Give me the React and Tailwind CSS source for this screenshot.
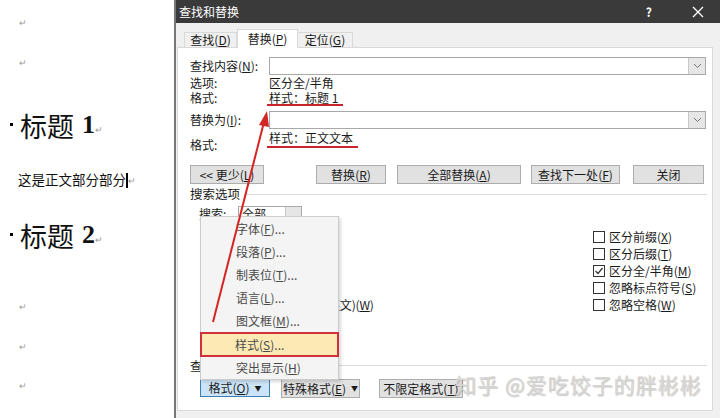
import React from "react";

const ui = "font-['Noto_Sans_CJK_SC','Noto_Sans',sans-serif]";

function Key({ k }) {
  return <>(<u>{k}</u>)</>;
}

function Btn({ children, className = "" }) {
  return (
    <div className={`h-[19px] flex items-center justify-center bg-[#e1e1e1] border border-[#adadad] leading-none ${className}`}>
      {children}
    </div>
  );
}

function Box({ checked }) {
  return (
    <span className="w-[12px] h-[12px] border border-[#333] bg-white flex items-center justify-center mr-[4px] shrink-0">
      {checked && (
        <svg width="10" height="10" viewBox="0 0 10 10">
          <path d="M1.5 5 L4 7.5 L8.5 2" fill="none" stroke="#333" strokeWidth="1.2" />
        </svg>
      )}
    </span>
  );
}

function Field() {
  return (
    <div className="w-[437px] h-[18px] bg-white border border-[#a9a9a9] flex justify-end">
      <div className="w-[17px] h-full bg-[#e6e6e6] border-l border-[#c8c8c8] flex items-center justify-center">
        <svg width="9" height="6" viewBox="0 0 9 6">
          <path d="M1 1 L4.5 4.5 L8 1" fill="none" stroke="#777" strokeWidth="1" />
        </svg>
      </div>
    </div>
  );
}

function Pilcrow() {
  return <span className="text-[9px] text-[#999] leading-none">↵</span>;
}

function Heading({ n }) {
  return (
    <div className="h-[34px] flex items-center pl-[10px] leading-none">
      <span className="w-[3px] h-[3px] bg-black mr-[7px] -mt-[2px]" />
      <span className="text-[27px] text-[#111]">标题</span>
      <span className="text-[26px] font-bold font-['Liberation_Serif',serif] ml-[8px]">{n}</span>
      <span className="self-end mb-[8px]"><Pilcrow /></span>
    </div>
  );
}

const leftOpts = ["区分大小写", "H", "全字匹配", "Y", "使用通配符", "U", "同音(英文)", "K", "查找单词的所有形式(英文)", "W"];
const rightOpts = [
  ["区分前缀", "X", false],
  ["区分后缀", "T", false],
  ["区分全/半角", "M", true],
  ["忽略标点符号", "S", false],
  ["忽略空格", "W", false],
];

const menuItems = [
  ["字体", "F", "..."],
  ["段落", "P", "..."],
  ["制表位", "T", "..."],
  ["语言", "L", "..."],
  ["图文框", "M", "..."],
];

export default function App() {
  return (
    <div className={`relative w-[720px] h-[418px] overflow-hidden flex bg-white ${ui}`}>
      {/* document page */}
      <div className="w-[174px] shrink-0 bg-white flex flex-col text-[#111]">
        <div className="h-[15px]" />
        <div className="h-[14px] pl-[19px] flex items-center"><Pilcrow /></div>
        <div className="h-[26px]" />
        <div className="h-[14px] pl-[19px] flex items-center"><Pilcrow /></div>
        <div className="h-[39px]" />
        <Heading n="1" />
        <div className="h-[30px]" />
        <div className="h-[16px] pl-[18px] flex items-center text-[13.5px] leading-none">
          这是正文部分部分
          <span className="w-[2px] h-[15px] bg-black" />
          <span className="text-[9px] text-[#999]">↵</span>
        </div>
        <div className="h-[30px]" />
        <Heading n="2" />
        <div className="h-[47px]" />
        <div className="h-[14px] pl-[19px] flex items-center"><Pilcrow /></div>
        <div className="h-[26px]" />
        <div className="h-[14px] pl-[19px] flex items-center"><Pilcrow /></div>
        <div className="h-[25px]" />
        <div className="h-[14px] pl-[19px] flex items-center"><Pilcrow /></div>
      </div>

      {/* dialog */}
      <div className="flex-1 flex flex-col bg-[#f0f0f0] border-l-2 border-[#777] text-[12px] text-[#1a1a1a]">
        <div className="h-[23px] shrink-0 bg-[#3a3a3a] flex items-center text-white pl-[3px]">
          <span className="text-[12px] leading-none">查找和替换</span>
          <span className="ml-auto mr-[40px] text-[12px] font-bold leading-none">?</span>
          <svg width="12" height="12" viewBox="0 0 12 12" className="mr-[16px]">
            <path d="M1 1 L11 11 M11 1 L1 11" stroke="#fff" strokeWidth="1.3" />
          </svg>
        </div>
        <div className="h-[24px] shrink-0 flex items-end pl-[8px] leading-none">
          <div className="w-[53px] h-[15px] border border-b-0 border-[#d9d9d9] bg-[#f0f0f0] flex items-center justify-center">
            查找<Key k="D" />
          </div>
          <div className="w-[61px] h-[19px] -mb-px border border-b-0 border-[#d9d9d9] bg-white flex items-center justify-center relative z-10">
            替换<Key k="P" />
          </div>
          <div className="w-[55px] h-[15px] border border-b-0 border-l-0 border-[#d9d9d9] bg-[#f0f0f0] flex items-center justify-center">
            定位<Key k="G" />
          </div>
        </div>

        <div className="ml-[1px] mr-[7px] h-[364px] bg-white border border-[#d9d9d9] flex flex-col pl-[12px] pr-[5px] leading-none">
          <div className="mt-[9px] h-[18px] flex items-center">
            <span className="w-[79px]">查找内容<Key k="N" />:</span>
            <Field />
          </div>
          <div className="h-[15px] flex items-center">
            <span className="w-[79px]">选项:</span>
            <span>区分全/半角</span>
          </div>
          <div className="h-[15px] flex items-center">
            <span className="w-[79px]">格式:</span>
            <span className="relative">
              样式：标题 1
              <span className="absolute left-[-2px] right-[-5px] top-[12px] h-[2px] bg-[#c8242c]" />
            </span>
          </div>
          <div className="mt-[6px] h-[18px] flex items-center">
            <span className="w-[79px]">替换为<Key k="I" />:</span>
            <Field />
          </div>
          <div className="h-[31px] flex items-start">
            <span className="w-[79px] pt-[10px]">格式:</span>
            <span className="relative pt-[3px]">
              样式：正文文本
              <span className="absolute left-[-2px] right-[-5px] top-[17px] h-[2px] bg-[#c8242c]" />
            </span>
          </div>

          <div className="mt-[5px] flex">
            <Btn className="w-[74px]">&lt;&lt; 更少<Key k="L" /></Btn>
            <Btn className="w-[70px] ml-[52px]">替换<Key k="R" /></Btn>
            <Btn className="w-[124px] ml-[11px]">全部替换<Key k="A" /></Btn>
            <Btn className="w-[89px] ml-[10px]">查找下一处<Key k="F" /></Btn>
            <Btn className="w-[71px] ml-[13px]">关闭</Btn>
          </div>

          <div className="mt-[2px] h-[16px] flex items-center">
            <span className="text-[12.5px]">搜索选项</span>
            <div className="flex-1 ml-[4px] border-t border-[#dcdcdc]" />
          </div>
          <div className="mt-[4px] h-[16px] flex items-center pl-[9px]">
            <span className="w-[39px]">搜索:</span>
            <div className="w-[64px] h-[16px] border border-[#a9a9a9] bg-white flex items-center">
              <span className="pl-[3px] flex-1">全部</span>
              <span className="w-[16px] h-full bg-[#e6e6e6] border-l border-[#c8c8c8]" />
            </div>
          </div>

          <div className="mt-[6px] flex">
            <div className="flex-1 pl-[12px] flex flex-col">
              {[0, 2, 4, 6, 8].map((i) => (
                <div key={i} className="h-[17px] flex items-center">
                  <Box />
                  <span className="tracking-[-0.2px]">{leftOpts[i]}<Key k={leftOpts[i + 1]} /></span>
                </div>
              ))}
            </div>
            <div className="w-[114px] flex flex-col">
              {rightOpts.map(([t, k, c]) => (
                <div key={t} className="h-[17px] flex items-center">
                  <Box checked={c} />
                  <span>{t}<Key k={k} /></span>
                </div>
              ))}
            </div>
          </div>

          <div className="mt-[45px] h-[15px] flex items-center">
            <span>查找</span>
            <div className="flex-1 ml-[4px] border-t border-[#dcdcdc]" />
          </div>
          <div className="mt-[6px] flex pl-[10px]">
            <div className="w-[70px] h-[18px] flex items-center justify-center bg-[#cce4f7] border border-[#3c7fb1]">
              格式<Key k="O" /><span className="ml-[5px] text-[7px]">▼</span>
            </div>
            <Btn className="w-[79px] h-[18px] ml-[11px]">特殊格式<Key k="E" /><span className="ml-[5px] text-[7px]">▼</span></Btn>
            <Btn className="w-[84px] h-[18px] ml-[19px]">不限定格式<Key k="T" /></Btn>
          </div>
        </div>
      </div>

      {/* popup menu from 格式 button */}
      <div className="absolute left-[200px] top-[216px] w-[139px] bg-[#f4f4f4] border border-[#cccccc] flex flex-col text-[12px] text-[#4a4a4a] leading-none shadow-[2px_2px_3px_rgba(0,0,0,0.15)]">
        {menuItems.map(([t, k, d]) => (
          <div key={t} className="h-[23px] flex items-center pl-[35px]">
            {t}<Key k={k} />{d}
          </div>
        ))}
        <div className="h-[25px] flex items-center pl-[33px] bg-[#fde9b4] border-2 border-[#d0303a] -mx-[1px]">
          样式<Key k="S" />...
        </div>
        <div className="h-[22px] flex items-center pl-[35px]">
          突出显示<Key k="H" />
        </div>
      </div>

      {/* red arrow */}
      <svg className="absolute left-0 top-0 pointer-events-none" width="720" height="418" viewBox="0 0 720 418">
        <line x1="213" y1="322" x2="264" y2="122" stroke="#d42525" strokeWidth="2" />
        <path d="M267 111 L259 125 L269 127 Z" fill="#d42525" />
      </svg>

      {/* watermark */}
      <div className="absolute left-[455px] top-[374px] text-[21px] leading-none text-[#d6d6d6] [text-shadow:1px_1px_1px_rgba(0,0,0,0.22)] tracking-[1px]">
        知乎 @爱吃饺子的胖彬彬
      </div>
    </div>
  );
}
